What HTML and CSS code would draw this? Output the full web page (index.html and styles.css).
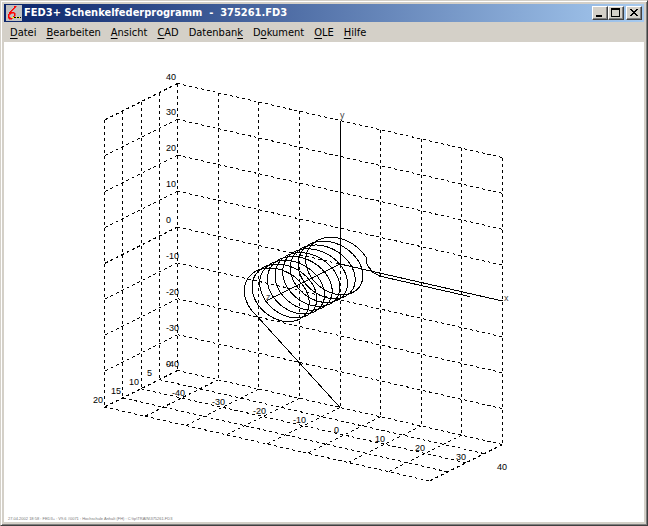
FILE: index.html
```
<!DOCTYPE html>
<html lang="de">
<head>
    <meta charset="UTF-8">
    <meta name="viewport" content="width=device-width, initial-scale=1.0">
    <title>FED3+ Schenkelfederprogramm - 375261.FD3</title>
    <link rel="stylesheet" href="styles.css">
</head>
<body>
    <div class="window">
        <header class="titlebar">
            <svg class="app-icon" viewBox="0 0 16 16" shape-rendering="crispEdges">
                <rect width="16" height="16" fill="#c0c0c0"/>
                <path d="M8 1h2v1h-1v1h-1v1h-1v1h-1v1h-1v1h3v1h1v3h-1v1h-1v-1h1v-3h-3v1h-2v3h1v1h2v1h-3v-1h-1v-4h1v-2h1v-1h1v-1h1v-1h1v-1h1z" fill="#f00" stroke="#f00" stroke-width="0.5"/>
                <path d="M6 12h9v1h-9z"/>
                <path d="M6 12h2v1h-2zM10 12h1v1h-1zM13 12h1v1h-1z" fill="#ff0"/>
            </svg>
            <h1>FED3+ Schenkelfederprogramm  -  375261.FD3</h1>
            <div class="controls">
                <button aria-label="Minimieren"><svg viewBox="0 0 12 10"><path d="M2 7h6v2h-6z"/></svg></button>
                <button aria-label="Maximieren"><svg viewBox="0 0 12 10"><path d="M1 0h9v9h-9zM2 2v6h7v-6z" fill-rule="evenodd"/></svg></button>
                <button class="close" aria-label="Schließen"><svg viewBox="0 0 12 10"><path d="M2 1h2v1h1v1h2v-1h1v-1h2v1h-1v1h-1v1h-1v1h1v1h1v1h1v1h-2v-1h-1v-1h-2v1h-1v1h-2v-1h1v-1h1v-1h1v-1h-1v-1h-1v-1h-1z"/></svg></button>
            </div>
        </header>
        <nav class="menu">
            <button><u>D</u>atei</button>
            <button><u>B</u>earbeiten</button>
            <button><u>A</u>nsicht</button>
            <button><u>C</u>AD</button>
            <button>Datenban<u>k</u></button>
            <button>D<u>o</u>kument</button>
            <button><u>O</u>LE</button>
            <button><u>H</u>ilfe</button>
        </nav>
        <main class="view">
            <svg id="plot" class="plot" viewBox="0 0 640 480" role="img" aria-label="Schenkelfeder 3D"></svg>
        </main>
    </div>
    <script src="script.js"></script>
</body>
</html>
```
FILE: styles.css
```
body {
    margin: 0;
    background: #d4d0c8;
    font-family: "DejaVu Sans Condensed", "DejaVu Sans", sans-serif;
    font-size: 11px;
    color: #000;
}
.window {
    box-sizing: border-box;
    display: flex;
    flex-direction: column;
    height: 100vh;
    padding: 3px;
    background: #d4d0c8;
    border: 1px solid;
    border-color: #d4d0c8 #404040 #404040 #d4d0c8;
    box-shadow: inset 1px 1px #fff, inset -1px -1px #808080;
}
.titlebar {
    display: flex;
    align-items: center;
    height: 18px;
    padding: 0 2px;
    background: linear-gradient(to right, #0a246a, #a6caf0);
}
.app-icon { width: 16px; height: 16px; }
h1 {
    flex: 1;
    margin: 0 0 0 2px;
    font-size: 11px;
    line-height: 18px;
    color: #fff;
    white-space: pre;
}
.controls { display: flex; }
.controls button {
    box-sizing: border-box;
    width: 16px;
    height: 14px;
    padding: 1px;
    background: #d4d0c8;
    border: 1px solid;
    border-color: #fff #404040 #404040 #fff;
    box-shadow: inset -1px -1px #808080;
}
.controls .close { margin-left: 2px; }
.controls svg {
    display: block;
    width: 12px;
    height: 10px;
    shape-rendering: crispEdges;
}
.menu {
    display: flex;
    height: 20px;
    padding-left: 1px;
}
.menu button {
    padding: 0 5px;
    border: none;
    background: none;
    font: inherit;
    line-height: 22px;
}
.menu u { text-underline-offset: 2px; }
.view {
    flex: 1;
    min-height: 0;
    background: #fff;
}
.plot {
    display: block;
    width: 100%;
    height: 100%;
}
.grid, .axis, .spring {
    fill: none;
    stroke: #000;
    stroke-width: 1;
    shape-rendering: crispEdges;
}
.grid { stroke-dasharray: 3 3; }
.label {
    font-family: "Liberation Sans", Arial, sans-serif;
    font-size: 9px;
}
.axis-name { fill: #444; }
.footer {
    font-family: "Liberation Sans", Arial, sans-serif;
    font-size: 4px;
    fill: #777;
}
```
FILE: script.js
```
const plot = document.getElementById('plot');

// x: -40..40, y: -40..40, z: 0..20 (towards the viewer)
function project(x, y, z) {
    return [
        336 + x * 4.0625 - z * 3.65,
        222 + x * 0.925 - y * 3.5875 + z * 1.825
    ];
}

function add(name, attrs, text) {
    const el = document.createElementNS('http://www.w3.org/2000/svg', name);
    for (const key in attrs) el.setAttribute(key, attrs[key]);
    if (text) el.textContent = text;
    plot.appendChild(el);
}

function line(cls, points) {
    const d = points.map(p => project(...p).map(v => v.toFixed(2)).join(',')).join(' ');
    add('polyline', { class: cls, points: d });
}

function label(text, point, dx, dy, cls) {
    const [x, y] = project(...point);
    add('text', { class: cls || 'label', x: Math.round(x + dx), y: Math.round(y + dy) }, text);
}

// back wall and floor
for (let x = -40; x <= 40; x += 10) {
    line('grid', [[x, 40, 0], [x, -40, 0]]);
    line('grid', [[x, -40, 0], [x, -40, 20]]);
    label(String(x), [x, -40, 0], -6, 25);
}
for (let y = -40; y <= 40; y += 10) {
    line('grid', [[-40, y, 0], [40, y, 0]]);
    line('grid', [[-40, y, 0], [-40, y, 20]]);
    label(String(y), [-40, y, 0], -12, -4);
}
// side wall and floor
for (let z = 0; z <= 20; z += 5) {
    if (z > 0) {
        line('grid', [[-40, 40, z], [-40, -40, z]]);
        line('grid', [[-40, -40, z], [40, -40, z]]);
    }
    label(String(z), [-40, -40, z], -12, -4);
}

line('axis', [[0, 0, 0], [40, 0, 0]]);
line('axis', [[0, 0, 0], [0, 40, 0]]);
line('axis', [[0, 0, 0], [0, 0, 20]]);
label('x', [40, 0, 0], 1, 0, 'label axis-name');
label('y', [0, 40, 0], 0, -3, 'label axis-name');
label('z', [0, 0, 20], -1, -1, 'label axis-name');

// spring body with both legs
const radius = 7.5;
const pitch = 2.1;
const coil = [[32, -0.85, 0], [9.8, -0.85, 0], [8.1, -0.2, 0], [6.7, 1.4, 0]];
for (let turn = 0.08; turn <= 8.65; turn += 0.01) {
    const a = turn * 2 * Math.PI;
    coil.push([radius * Math.cos(a), radius * Math.sin(a), turn * pitch]);
}
coil.push([0, -40, 0]);
line('spring', coil);

add('text', { class: 'footer', x: 4, y: 478 }, '27.04.2002 18:58 : FED3+ : V9.6 #0071 : Hochschule Anhalt (FH) : C:\\tp\\TRAIN\\375261.FD3');
```
